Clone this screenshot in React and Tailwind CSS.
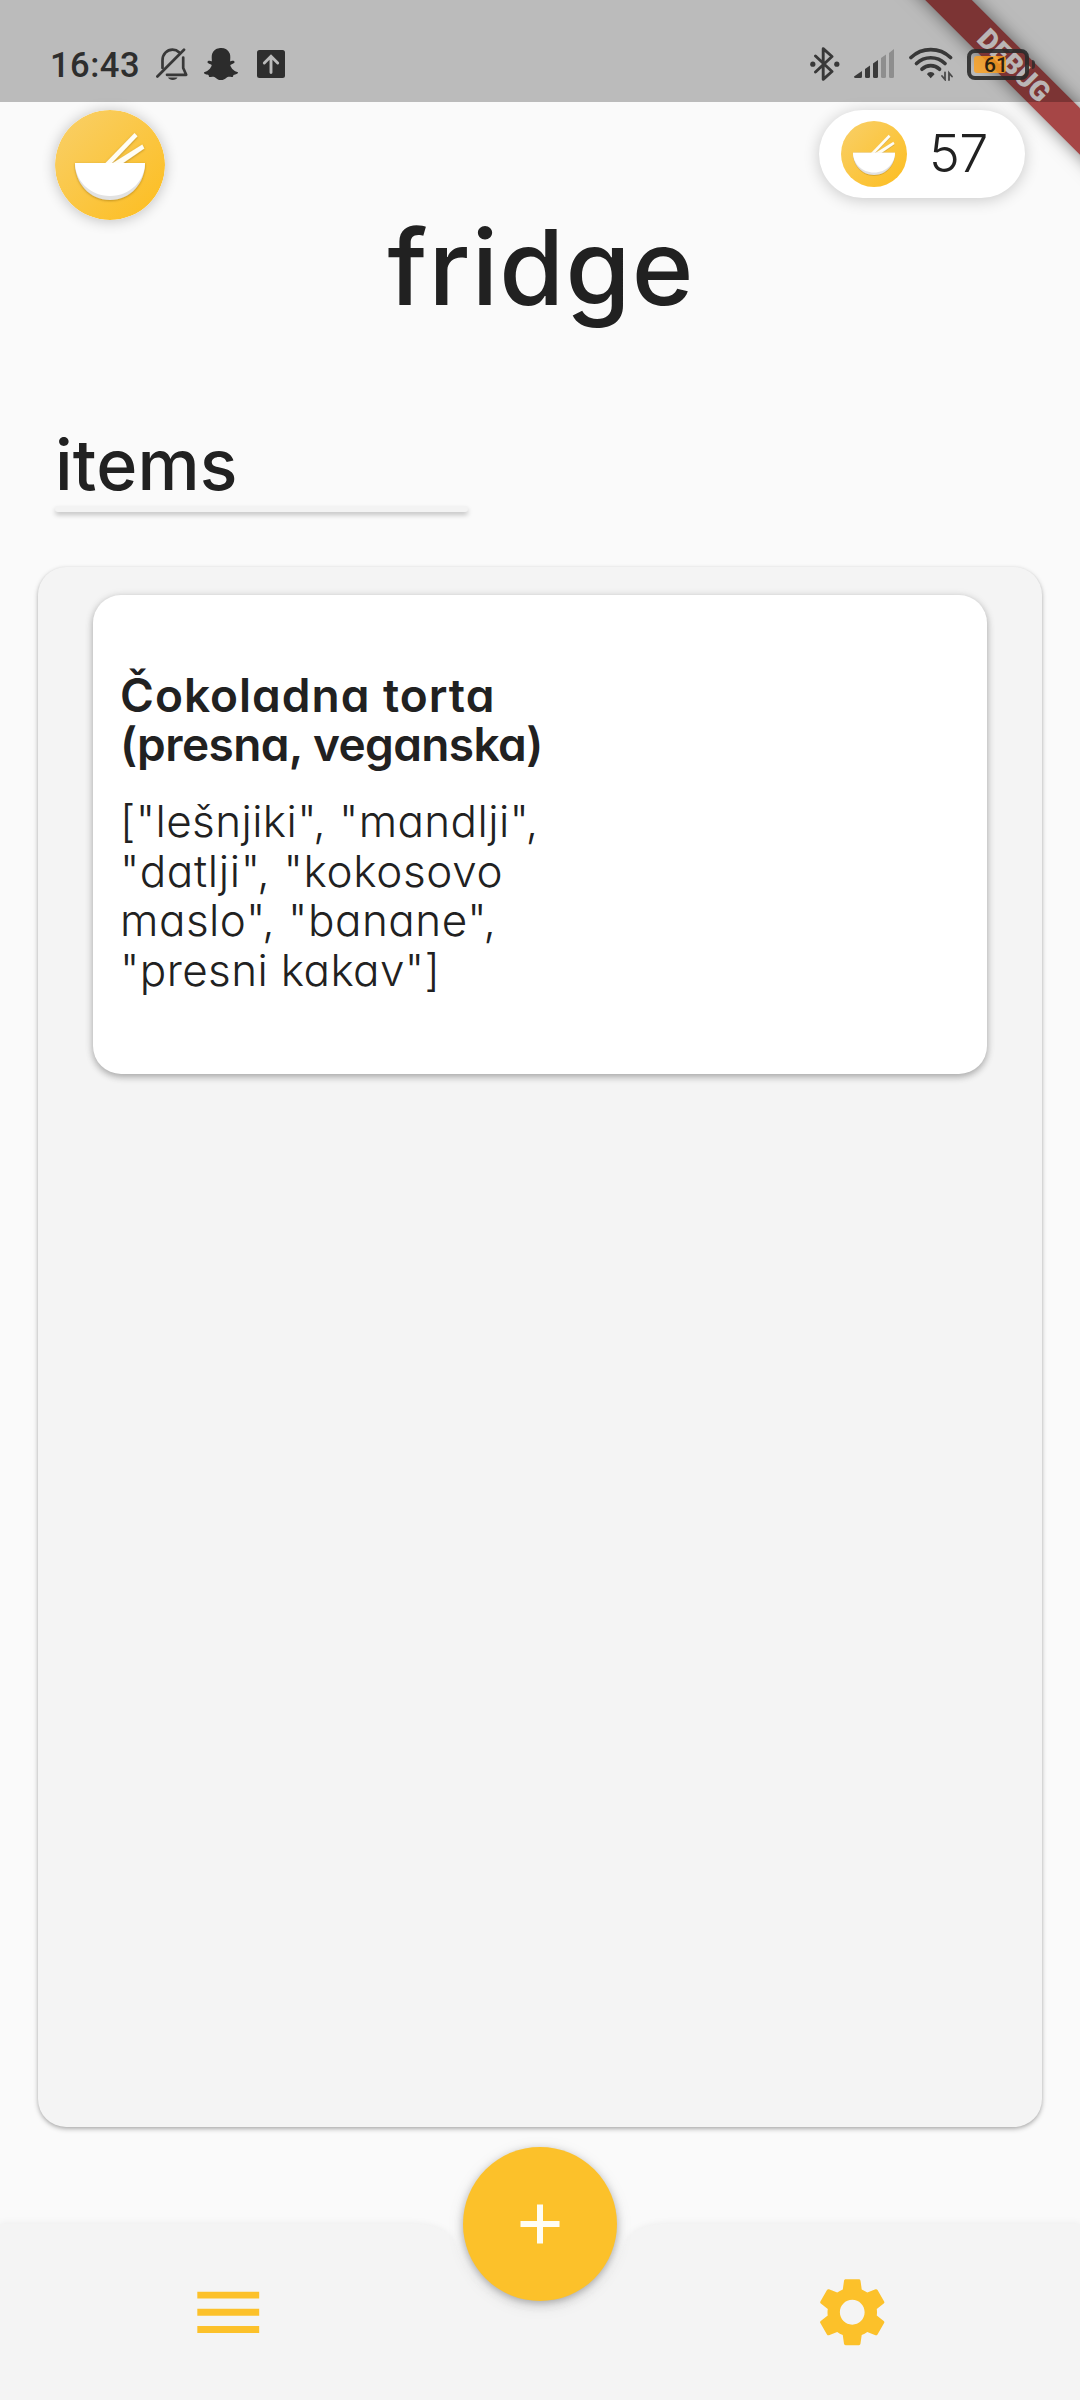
import React from "react";
import { MdMenu, MdSettings } from "react-icons/md";
import { FaSnapchatGhost } from "react-icons/fa";

const TEXT = "font-[Inter,sans-serif] [font-feature-settings:'cv11',_'calt'_0] text-[#212121]";

function BowlLogo({ className }) {
  return (
    <svg viewBox="0 0 110 110" className={className}>
      <defs>
        <linearGradient id="amber" x1="0.1" y1="0.1" x2="0.85" y2="0.85">
          <stop offset="0" stopColor="#f9ce62" />
          <stop offset="1" stopColor="#fcc02a" />
        </linearGradient>
        <filter id="soft" x="-20%" y="-20%" width="140%" height="150%">
          <feDropShadow dx="0" dy="0.8" stdDeviation="1.2" floodColor="#7a5600" floodOpacity="0.5" />
        </filter>
      </defs>
      <circle cx="55" cy="55" r="55" fill="url(#amber)" />
      <g filter="url(#soft)">
        <path d="M50 53.5 79.5 23l3 3.200L56.500 53.500z" fill="#fffdf4" />
        <path d="M57 53.500 87.300 34.500l2 4L67.500 53.500z" fill="#fffdf4" />
        <path d="M20 53h70c0 20-14.500 37-35 37S20 73 20 53z" fill="#e2e2e2" />
        <path d="M20 53h70c0 17-14.500 33-35 33S20 70 20 53z" fill="#fff" />
      </g>
    </svg>
  );
}

function BellOff() {
  return (
    <svg viewBox="0 0 32 33" className="h-[33px] w-8" fill="none" stroke="#383838" strokeWidth="2.700" strokeLinecap="round">
      <path d="M6.500 20V12.500C6.500 6 11 1.700 16.500 1.700c3 0 5 1 6.500 2.500" />
      <path d="M27.200 9.500V20l3 6.800H11" strokeLinejoin="round" />
      <path d="M1.400 28.500 28 1.800" />
      <path d="M12 29.600h9.500c-1.200 3.200-8.300 3.200-9.500 0z" fill="#383838" stroke="none" />
    </svg>
  );
}

function UploadBox() {
  return (
    <svg viewBox="0 0 28 28" className="size-7">
      <rect width="28" height="28" rx="2.500" fill="#2e2e2e" />
      <path d="M14 22.500V6.500M7.300 13 14 6.300 20.700 13" fill="none" stroke="#bbb" strokeWidth="2.900" strokeLinecap="round" />
    </svg>
  );
}

function Bluetooth() {
  return (
    <svg viewBox="0 0 30 34" className="h-[34px] w-[30px]" fill="none" stroke="#383838" strokeWidth="2.900" strokeLinejoin="round" strokeLinecap="round">
      <path d="M5.500 9 22 24.500 13.200 32.300V1.700L22 9.500 5.500 25" />
      <circle cx="2.800" cy="17.200" r="2.600" fill="#383838" stroke="none" />
      <circle cx="26.800" cy="17.200" r="2.600" fill="#383838" stroke="none" />
    </svg>
  );
}

function Signal() {
  return (
    <svg viewBox="0 0 41 30" className="h-[30px] w-[41px]">
      <g fill="#3a3a3a">
        <path d="M0 27.500 8 22v5.500q0 1.500-1.500 1.500H1.500Q0 29 0 27.500z" />
        <path d="M11 20 16 16.500v11q0 1.500-1.500 1.500h-2Q11 29 11 27.500z" />
        <path d="M19 14.500 24 11v16.500q0 1.500-1.500 1.500h-2Q19 29 19 27.500z" />
      </g>
      <g fill="#8e8e8e">
        <path d="M27 9 32 5.500v22q0 1.500-1.500 1.500h-2Q27 29 27 27.500z" />
        <path d="M35 4 40 0v27.500q0 1.500-1.500 1.500h-2Q35 29 35 27.500z" />
      </g>
    </svg>
  );
}

function Wifi() {
  return (
    <svg viewBox="0 0 44 34" className="h-[34px] w-11" fill="none" stroke="#383838" strokeWidth="3.700" strokeLinecap="round">
      <path d="M2 10.500c11-10.500 28.500-10.500 39.500 0" />
      <path d="M7.500 16.500c8-7.700 20.500-7.700 28.500 0" />
      <path d="M13 22.200c5-4.800 12.500-4.800 17.500 0" />
      <path d="M18 27.300c1.200-3 6.300-3 7.500 0l-3.800 4z" fill="#383838" stroke="none" />
      <path d="M36 25.500v7l-3-3.500M40 33v-7l3 3.500" strokeWidth="1.800" stroke="#4a4a4a" />
    </svg>
  );
}

function Battery() {
  return (
    <div className="flex items-center gap-[3px]">
      <div className="relative flex h-[31px] w-[62px] items-center rounded-[8px] border-4 border-[#2a2a2a]/90 pl-[3px]">
        <span className="h-[17px] w-[32px] rounded-[3px] bg-[#ffa11c]/80" />
        <span className="absolute inset-0 flex items-center justify-center pt-[2px] pr-1 font-[Roboto,sans-serif] text-[21px] leading-none font-medium text-[#2b2110]">
          61
        </span>
      </div>
      <span className="h-[9px] w-[3px] rounded-r bg-[#2a2a2a]/80" />
    </div>
  );
}

function StatusBar() {
  return (
    <div className="relative z-20 flex h-[102px] items-start justify-between bg-black/25 pl-[50px] pr-[45px] pt-[47px]">
      <div className="flex h-[34px] items-center">
        <span className="w-[106px] pt-px font-[Roboto,sans-serif] text-[34.500px] leading-[34px] font-medium tracking-[0.500px] text-[#2e2e2e]">
          16:43
        </span>
        <BellOff />
        <FaSnapchatGhost className="ml-4 size-[34px] text-[#2c2c2c]" />
        <span className="ml-[19px]">
          <UploadBox />
        </span>
      </div>
      <div className="flex h-[34px] items-center">
        <Bluetooth />
        <span className="ml-[14px]">
          <Signal />
        </span>
        <span className="ml-[14px]">
          <Wifi />
        </span>
        <span className="ml-[14px]">
          <Battery />
        </span>
      </div>
    </div>
  );
}

function DebugBanner() {
  return (
    <div className="pointer-events-none absolute top-0 right-0 z-10 size-[240px] overflow-hidden">
      <div className="absolute top-[49px] left-[-26px] flex h-[33px] w-[400px] rotate-45 items-center justify-center bg-[#a64646] shadow-[0_0_17px_rgba(0,0,0,0.5)]">
        <span className="font-[Roboto,sans-serif] text-[28px] leading-none font-black text-white/95">DEBUG</span>
      </div>
    </div>
  );
}

function ItemCard() {
  return (
    <article className="mx-[55px] h-[479px] rounded-[28px] bg-white px-[27px] pt-[76px] whitespace-nowrap shadow-[0_3px_7px_rgba(0,0,0,0.26),0_1px_10px_rgba(0,0,0,0.1)]">
      <h3 className="text-[46px] leading-[49px] font-semibold">
        <span className="block tracking-[1px]">Čokoladna torta</span>
        <span className="block tracking-[-0.600px]">(presna, veganska)</span>
      </h3>
      <p className="mt-7 text-[44px] leading-[49.600px] font-light">
        <span className="block tracking-[0.400px]">["lešnjiki", "mandlji",</span>
        <span className="block tracking-[0.700px]">"datlji", "kokosovo</span>
        <span className="block tracking-[0.500px]">maslo", "banane",</span>
        <span className="block tracking-[0.400px]">"presni kakav"]</span>
      </p>
    </article>
  );
}

function BottomNav() {
  return (
    <nav className="relative mt-[97px] flex h-[176px] items-center justify-between pr-[187px] pl-[187px]">
      <svg viewBox="0 -20 1080 197" className="absolute inset-x-0 -top-5 h-[197px] w-full">
        <path
          d="M0 0H408Q449 0 454.700 21.500A88 88 0 0 0 625.300 21.500Q631 0 672 0H1080V177H0z"
          fill="#f4f4f4"
          className="drop-shadow-[0_-1px_3px_rgba(0,0,0,0.05)]"
        />
      </svg>
      <MdMenu className="relative size-[82.500px] text-[#fcc12a]" />
      <button className="absolute -top-[77px] left-[463px] flex size-[154px] items-center justify-center rounded-full bg-[#fcc12a] shadow-[0_3px_8px_rgba(0,0,0,0.28),0_4px_18px_rgba(0,0,0,0.09)]">
        <svg viewBox="0 0 40 40" className="size-10" stroke="#fffdf2" strokeWidth="6">
          <path d="M20 0.500v39M0.500 20h39" />
        </svg>
      </button>
      <MdSettings className="relative size-[82.500px] text-[#fcc12a]" />
    </nav>
  );
}

export default function App() {
  return (
    <div className={`relative flex h-[2400px] w-[1080px] flex-col overflow-hidden bg-[#fafafa] ${TEXT}`}>
      <StatusBar />
      <DebugBanner />
      <header className="flex h-[118px] items-start justify-between px-[55px] pt-2">
        <BowlLogo className="size-[110px] rounded-full shadow-[0_1px_14px_rgba(0,0,0,0.24)]" />
        <div className="flex h-[88px] w-[206px] items-center rounded-full bg-white pl-[22px] shadow-[0_2px_16px_rgba(0,0,0,0.2)]">
          <BowlLogo className="size-[66px]" />
          <span className="pl-[22px] text-[52px] leading-none font-light tracking-[-0.500px]">57</span>
        </div>
      </header>
      <h1 className="pl-0.5 text-center text-[105px] leading-[94px] font-[550] tracking-[1.200px]">fridge</h1>
      <section className="mt-[115px] px-[55px]">
        <h2 className="text-[70px] leading-[72px] font-[550] tracking-[0.200px]">items</h2>
        <div className="mt-[5px] h-1.5 w-[413px] rounded-[3px] bg-[#f3f3f3] shadow-[0_3px_5px_rgba(0,0,0,0.22)]" />
      </section>
      <main className="mx-[38px] mt-[55px] h-[1560px] shrink-0 rounded-[28px] bg-[#f4f4f4] pt-7 shadow-[0_2px_5px_rgba(0,0,0,0.28),0_1px_3px_rgba(0,0,0,0.08)]">
        <ItemCard />
      </main>
      <BottomNav />
    </div>
  );
}
